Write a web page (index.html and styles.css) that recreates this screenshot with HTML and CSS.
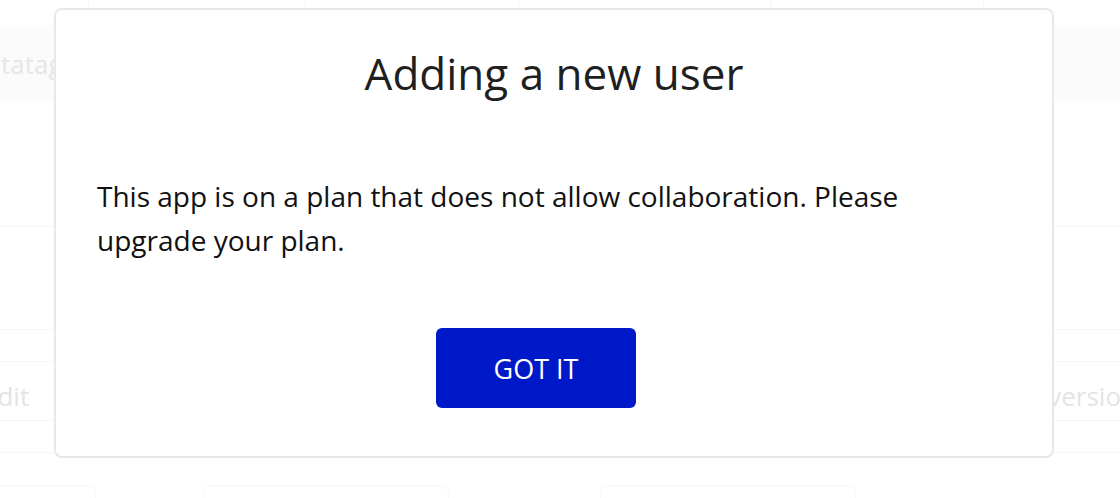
FILE: index.html
```html
<!DOCTYPE html>
<html lang="en">
<head>
<meta charset="utf-8">
<title>Adding a new user</title>
<link rel="stylesheet" href="styles.css">
</head>
<body>
<div class="page">
  <div class="top-row">
    <div class="cell c1"></div>
    <div class="cell c2"></div>
    <div class="cell c3"></div>
    <div class="cell c4"></div>
    <div class="cell c5"></div>
    <div class="cell c6"></div>
  </div>
  <div class="band"><span class="band-text">tatags</span></div>
  <div class="row r1"></div>
  <div class="row r2"></div>
  <div class="row r3"></div>
  <div class="row r4"><span class="ghost edit">Edit</span><span class="ghost version">version</span></div>
  <div class="row r5"></div>
  <div class="cards">
    <div class="card k1"></div>
    <div class="card k2"></div>
    <div class="card k3"></div>
  </div>
</div>

<div class="modal" role="dialog" aria-labelledby="modal-title">
  <h1 class="modal-title" id="modal-title">Adding a new user</h1>
  <div class="modal-content">
    <p class="modal-body">This app is on a plan that does not allow collaboration. Please upgrade your plan.</p>
    <div class="modal-actions">
      <button class="btn-primary" type="button">GOT IT</button>
    </div>
  </div>
</div>
</body>
</html>
```

FILE: styles.css
```css
html, body {
  margin: 0;
  padding: 0;
}
body {
  width: 1120px;
  height: 498px;
  overflow: hidden;
  background: #ffffff;
  font-family: "Open Sans", "Noto Sans", sans-serif;
  position: relative;
}

/* faint background page */
.page {
  display: flex;
  flex-direction: column;
  width: 1120px;
  height: 498px;
  overflow: hidden;
}
.top-row {
  display: flex;
  height: 10px;
  flex: none;
}
.cell {
  height: 10px;
  border-right: 1px solid #f6f6f6;
  box-sizing: border-box;
}
.c1 { width: 89px; }
.c2 { width: 217px; }
.c3 { width: 213px; }
.c4 { width: 252px; }
.c5 { width: 213px; }
.c6 { flex: 1; border-right: none; }

.band {
  margin-top: 15px;
  height: 76px;
  background: #fbfbfb;
  display: flex;
  align-items: center;
  flex: none;
}
.band-text {
  font-size: 26px;
  color: #e6e6e6;
  margin-left: 1px;
  margin-top: 2px;
}
.row {
  flex: none;
  border-bottom: 1px solid #f6f6f6;
  box-sizing: border-box;
}
.r1 { height: 126px; }
.r2 { height: 103px; }
.r3 { height: 32px; }
.r4 {
  height: 59px;
  display: flex;
  align-items: center;
  justify-content: space-between;
}
.r5 { height: 32px; border-bottom-color: #f7f7f7; }
.ghost {
  font-size: 26px;
  color: #e4e4e4;
}
.edit { margin-left: -17px; margin-top: 10px; }
.version { margin-right: -17px; margin-top: 10px; }

.cards {
  display: flex;
  margin-top: 32px;
  flex: none;
}
.card {
  height: 30px;
  border: 1px solid #f7f7f7;
  border-radius: 8px;
  box-sizing: border-box;
}
.k1 { width: 106px; margin-left: -10px; }
.k2 { width: 246px; margin-left: 107px; }
.k3 { width: 256px; margin-left: 151px; }

/* modal */
.modal {
  position: absolute;
  left: 54px;
  top: 8px;
  width: 1000px;
  height: 450px;
  box-sizing: border-box;
  border: 2px solid #e8e8e8;
  border-radius: 8px;
  background: #ffffff;
  display: flex;
  flex-direction: column;
  padding-top: 33px;
}
.modal-title {
  margin: 0;
  font-size: 44px;
  line-height: 60px;
  font-weight: 400;
  color: #1f1f1f;
  text-align: center;
}
.modal-content {
  display: flex;
  flex-direction: column;
  padding: 0 77px 0 41px;
}
.modal-body {
  margin: 71px 0 0 0;
  font-size: 28px;
  line-height: 44px;
  color: #111111;
}
.modal-actions {
  display: flex;
  justify-content: center;
  margin-top: 66px;
}
.btn-primary {
  width: 200px;
  height: 80px;
  border: none;
  border-radius: 6px;
  background: #0019c8;
  color: #ffffff;
  font-family: "Open Sans", "Noto Sans", sans-serif;
  font-size: 27px;
  font-weight: 400;
  cursor: pointer;
}
```
